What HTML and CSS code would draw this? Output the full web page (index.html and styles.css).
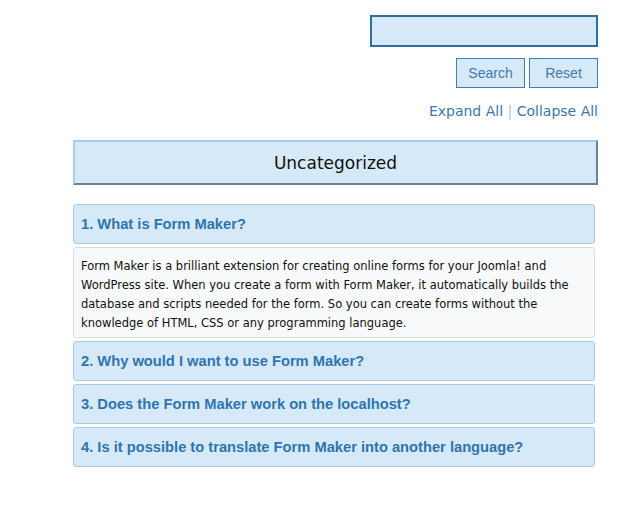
FILE: index.html
```html
<!DOCTYPE html>
<html>
<head>
<meta charset="utf-8">
<link rel="stylesheet" href="styles.css">
</head>
<body>
<div class="page">
  <div class="search">
    <input class="search-input" type="text">
    <div class="buttons">
      <button class="btn">Search</button>
      <button class="btn">Reset</button>
    </div>
    <div class="expand"><a>Expand All</a> <span class="sep">|</span> <a>Collapse All</a></div>
  </div>
  <div class="category">Uncategorized</div>
  <div class="faq">
    <div class="q">1. What is Form Maker?</div>
    <div class="a">Form Maker is a brilliant extension for creating online forms for your Joomla! and WordPress site. When you create a form with Form Maker, it automatically builds the database and scripts needed for the form. So you can create forms without the knowledge of HTML, CSS or any programming language.</div>
    <div class="q">2. Why would I want to use Form Maker?</div>
    <div class="q">3. Does the Form Maker work on the localhost?</div>
    <div class="q">4. Is it possible to translate Form Maker into another language?</div>
  </div>
</div>
</body>
</html>
```
FILE: styles.css
```css
* { box-sizing: border-box; }
body { margin: 0; background: #fff; }
.page { padding: 15px 22px 0 73px; }
.search { display: flex; flex-direction: column; align-items: flex-end; }
.search-input {
  width: 228px; height: 32px; margin: 0;
  border: 2px solid #2f6e9f; background: #d6e9f8; outline: none;
}
.buttons { display: flex; gap: 4px; margin-top: 11px; }
.btn {
  width: 69px; height: 30px; margin: 0; padding: 0;
  border: 1px solid #3c7fb3; background: #d6e9f8; color: #3f79a8;
  font: 14px "Liberation Sans", Arial, sans-serif;
}
.expand {
  margin-top: 15px; height: 20px; line-height: 20px;
  font: 14px "DejaVu Sans", sans-serif; color: #3d77a8;
}
.expand a { color: #3d77a8; }
.sep { color: #a9c1d6; }
.category {
  margin-top: 17px; height: 45px; width: 525px;
  display: flex; align-items: center; justify-content: center;
  background: #d6e9f8;
  border-top: 2px solid #a8cde9; border-left: 2px solid #a8cde9;
  border-right: 2px solid #6c8294; border-bottom: 2px solid #6c8294;
  font: 17px "DejaVu Sans", sans-serif; color: #111;
}
.faq { margin-top: 19px; width: 522px; display: flex; flex-direction: column; gap: 3px; }
.q {
  height: 40px; padding: 0 7px; display: flex; align-items: center;
  background: #d6e9f8; border: 1px solid #a8cbe4; border-radius: 3px;
  font: bold 14.7px "Liberation Sans", Arial, sans-serif; color: #2e75ae;
}
.a {
  height: 91px; padding: 9px 7px 0;
  background: #f8f9fa; border: 1px solid #d7dcdf; border-radius: 3px;
  font: 11.5px/19px "DejaVu Sans", sans-serif; color: #111;
}
```
